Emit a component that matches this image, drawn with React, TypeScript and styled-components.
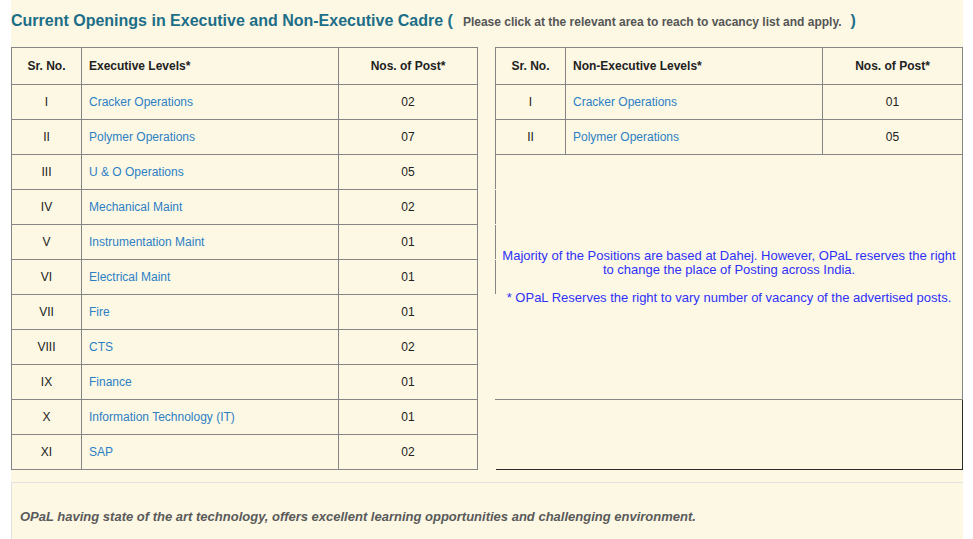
import React from "react";
import styled, { createGlobalStyle } from "styled-components";

const GlobalStyle = createGlobalStyle`
  html, body { margin: 0; padding: 0; background: #ffffff; }
  body { font-family: "Liberation Sans", Arial, sans-serif; }
  * { box-sizing: border-box; }
`;

const CREAM = "#fcf8e4";
const LINE = "#858585";

const Page = styled.div`
  padding-left: 11px;
  width: 963px;
`;

const Panel = styled.section`
  background: ${CREAM};
  width: 952px;
`;

const TitleBar = styled.h2`
  margin: 0;
  height: 47px;
  padding-top: 11px;
  display: flex;
  align-items: baseline;
  font-size: 16px;
  line-height: 20px;
  font-weight: bold;
  color: #1c6e88;
  white-space: nowrap;
`;

const TitleNote = styled.span`
  font-size: 12px;
  color: #555555;
  margin: 0 9px 0 10px;
`;

const Tables = styled.div`
  display: flex;
  gap: 17px;
  align-items: flex-start;
`;

const Grid = styled.div<{ $cols: string }>`
  display: grid;
  grid-template-columns: ${(p) => p.$cols};
  border-top: 1px solid ${LINE};
  border-left: 1px solid ${LINE};
  font-size: 12px;
  color: #222;
`;

const Cell = styled.div<{ $align?: "left" | "center"; $head?: boolean }>`
  height: ${(p) => (p.$head ? "37px" : "35px")};
  border-right: 1px solid ${LINE};
  border-bottom: 1px solid ${LINE};
  display: flex;
  align-items: center;
  justify-content: ${(p) => (p.$align === "left" ? "flex-start" : "center")};
  padding-left: ${(p) => (p.$align === "left" ? "7px" : "0")};
  padding-bottom: ${(p) => (p.$head ? "1px" : "0")};
  font-weight: ${(p) => (p.$head ? "bold" : "normal")};
`;

const Link = styled.a`
  color: #2d7fc4;
  text-decoration: none;
  cursor: pointer;
`;

const RightWrap = styled.div`
  width: 468px;
  display: flex;
  flex-direction: column;
`;

const InfoCell = styled.div`
  height: 245px;
  border-right: 1px solid ${LINE};
  border-bottom: 1px solid ${LINE};
  display: grid;
  grid-template-columns: 1px 1fr;
`;

const Rail = styled.div`
  display: flex;
  flex-direction: column;
  gap: 1px;
`;

const RailSeg = styled.span`
  display: block;
  height: 34px;
  background: ${LINE};
`;

const InfoText = styled.div`
  display: flex;
  flex-direction: column;
  justify-content: center;
  align-items: center;
  text-align: center;
  padding: 0 4px 0 4px;
  color: #2f30f8;
  font-size: 13px;
  line-height: 14px;
`;

const InfoPara = styled.p`
  margin: 0 0 14px;
  &:last-child { margin-bottom: 0; }
`;

const EmptyCell = styled.div`
  height: 70px;
  margin-left: 1px;
  border-right: 1px solid #2a2a2a;
  border-bottom: 1px solid #2a2a2a;
`;

const Footer = styled.div`
  margin-top: 12px;
  border-top: 1px solid #e2e2e2;
  border-left: 1px solid #e2e2e2;
  padding: 26px 8px 20px;
  font-size: 13px;
  line-height: 16px;
  font-style: italic;
  font-weight: bold;
  color: #5a5a5a;
`;

const exec = [
  ["I", "Cracker Operations", "02"],
  ["II", "Polymer Operations", "07"],
  ["III", "U & O Operations", "05"],
  ["IV", "Mechanical Maint", "02"],
  ["V", "Instrumentation Maint", "01"],
  ["VI", "Electrical Maint", "01"],
  ["VII", "Fire", "01"],
  ["VIII", "CTS", "02"],
  ["IX", "Finance", "01"],
  ["X", "Information Technology (IT)", "01"],
  ["XI", "SAP", "02"],
];

const nonExec = [
  ["I", "Cracker Operations", "01"],
  ["II", "Polymer Operations", "05"],
];

export default function App() {
  return (
    <>
      <GlobalStyle />
      <Page>
        <Panel>
          <TitleBar>
            Current Openings in Executive and Non-Executive Cadre (
            <TitleNote>Please click at the relevant area to reach to vacancy list and apply.</TitleNote>)
          </TitleBar>
          <Tables>
            <Grid $cols="70px 257px 139px" style={{ width: 467 }}>
              <Cell $head>Sr. No.</Cell>
              <Cell $head $align="left">Executive Levels*</Cell>
              <Cell $head>Nos. of Post*</Cell>
              {exec.map(([n, name, c]) => (
                <React.Fragment key={n}>
                  <Cell>{n}</Cell>
                  <Cell $align="left"><Link>{name}</Link></Cell>
                  <Cell>{c}</Cell>
                </React.Fragment>
              ))}
            </Grid>
            <RightWrap>
              <Grid $cols="70px 257px 140px">
                <Cell $head>Sr. No.</Cell>
                <Cell $head $align="left">Non-Executive Levels*</Cell>
                <Cell $head>Nos. of Post*</Cell>
                {nonExec.map(([n, name, c]) => (
                  <React.Fragment key={n}>
                    <Cell>{n}</Cell>
                    <Cell $align="left"><Link>{name}</Link></Cell>
                    <Cell>{c}</Cell>
                  </React.Fragment>
                ))}
              </Grid>
              <InfoCell>
                <Rail>
                  <RailSeg />
                  <RailSeg />
                  <RailSeg />
                  <RailSeg />
                </Rail>
                <InfoText>
                  <InfoPara>
                    Majority of the Positions are based at Dahej. However, OPaL reserves the right to change the
                    place of Posting across India.
                  </InfoPara>
                  <InfoPara>* OPaL Reserves the right to vary number of vacancy of the advertised posts.</InfoPara>
                </InfoText>
              </InfoCell>
              <EmptyCell />
            </RightWrap>
          </Tables>
          <Footer>
            OPaL having state of the art technology, offers excellent learning opportunities and challenging
            environment.
          </Footer>
        </Panel>
      </Page>
    </>
  );
}
